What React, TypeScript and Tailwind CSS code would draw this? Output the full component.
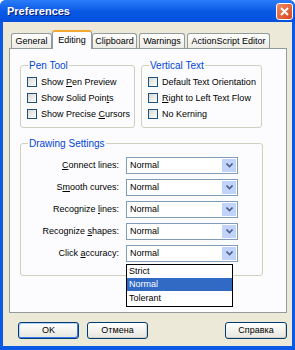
import React from 'react'

const font = { fontFamily: '"Liberation Sans", Arial, sans-serif' }

function Checkbox({ children }: { children: React.ReactNode }) {
    return (
        <div className="h-[16px] flex items-center gap-[4px]">
            <span className="w-[10px] h-[10px] border border-[#1c5180] bg-gradient-to-br from-[#d8d8d0] to-[#ffffff] shrink-0" />
            <span className="text-[9px] leading-none text-black whitespace-nowrap">{children}</span>
        </div>
    )
}

function GroupBox({ title, className, children }: { title: string; className: string; children: React.ReactNode }) {
    return (
        <div className={`relative border border-[#d0d0bf] rounded-[3px] ${className}`}>
            <span className="absolute -top-[6px] left-[7px] bg-[#fcfcfe] px-[1px] text-[10px] leading-[11px] text-[#0046d5] whitespace-nowrap">
                {title}
            </span>
            {children}
        </div>
    )
}

function Combo({ label, open }: { label: React.ReactNode; open?: boolean }) {
    return (
        <div className="h-[17px] flex items-center">
            <div className="w-[98px] text-right text-[9px] leading-none text-black whitespace-nowrap">{label}</div>
            <div className="relative ml-[7px] w-[112px] h-[17px] border border-[#7f9db9] bg-white flex items-center">
                <span className="pl-[3px] text-[9px] leading-none text-black">Normal</span>
                <span className="ml-auto mr-[1px] w-[14px] h-[13px] bg-[#c1d3fb] flex items-center justify-center">
                    <svg width="7" height="5" viewBox="0 0 7 5">
                        <path d="M0.5 0.5 L3.5 3.5 L6.5 0.5" fill="none" stroke="#4d6185" strokeWidth="1.6" />
                    </svg>
                </span>
                {open && (
                    <div className="absolute left-[-1px] top-[18px] w-[107px] border border-black bg-white z-20">
                        <div className="h-[13px] pl-[2px] flex items-center text-[9px] leading-none text-black">Strict</div>
                        <div className="h-[13px] pl-[2px] flex items-center text-[9px] leading-none text-white bg-[#316ac5]">Normal</div>
                        <div className="h-[15px] pl-[2px] flex items-center text-[9px] leading-none text-black">Tolerant</div>
                    </div>
                )}
            </div>
        </div>
    )
}

function Tab({ label, w, active }: { label: string; w: string; active?: boolean }) {
    if (active) {
        return (
            <div className={`${w} h-[19px] -mb-px relative z-10 border-x border-[#919b9c] border-t-2 border-t-[#f0a830] rounded-t-[3px] bg-[#fcfcfe] flex items-center justify-center text-[9px] leading-none text-black`}>
                {label}
            </div>
        )
    }
    return (
        <div className={`${w} h-[15px] border-x border-t border-[#919b9c] rounded-t-[3px] bg-gradient-to-b from-[#ffffff] to-[#ecebe5] flex items-center justify-center text-[9px] leading-none text-black`}>
            {label}
        </div>
    )
}

function Button({ label, def, w }: { label: string; def?: boolean; w: string }) {
    return (
        <div
            className={`${w} h-[17px] rounded-[3px] border border-[#003c74] bg-gradient-to-b from-[#ffffff] to-[#e6e5dd] flex items-center justify-center text-[9px] leading-none text-black ${def ? 'shadow-[inset_-1px_-1px_0_#3d7bf3,inset_1px_1px_0_#b4cff8]' : 'shadow-[inset_-1px_-1px_0_#d6d0c5]'}`}
        >
            {label}
        </div>
    )
}

export default function App() {
    return (
        <div style={font} className="w-[295px] h-[350px] bg-[#0a5ae6] rounded-t-[6px] flex flex-col overflow-hidden">
            <div className="h-[22px] shrink-0 flex items-center pl-[7px] pr-[2px] bg-gradient-to-b from-[#2a7cf8] via-[#0a5ae6] to-[#0550dc]">
                <span className="text-[11px] font-bold text-white leading-none [text-shadow:1px_1px_0_#0a1e80]">Preferences</span>
                <span className="ml-auto w-[17px] h-[17px] rounded-[3px] border border-white bg-gradient-to-br from-[#ee8a5e] to-[#d8421c] flex items-center justify-center">
                    <svg width="9" height="9" viewBox="0 0 9 9">
                        <path d="M1 1 L8 8 M8 1 L1 8" stroke="white" strokeWidth="2" />
                    </svg>
                </span>
            </div>
            <div className="flex-1 mx-[3px] mb-[4px] bg-[#ece9d8] flex flex-col">
                <div className="pt-[7px] pl-[8px] flex items-end h-[26px]">
                    <Tab label="General" w="w-[41px]" />
                    <Tab label="Editing" w="w-[40px]" active />
                    <Tab label="Clipboard" w="w-[45px]" />
                    <div className="w-[2px]" />
                    <Tab label="Warnings" w="w-[46px]" />
                    <div className="w-[2px]" />
                    <Tab label="ActionScript Editor" w="w-[83px]" />
                </div>
                <div className="ml-[6px] w-[278px] h-[265px] border border-[#919b9c] bg-[#fcfcfe] pl-[10px] pt-[16px]">
                    <div className="flex gap-[6px]">
                        <GroupBox title="Pen Tool" className="w-[115px] h-[63px] pl-[6px] pt-[8px]">
                            <Checkbox>Show <u>P</u>en Preview</Checkbox>
                            <Checkbox>Show Solid Poin<u>t</u>s</Checkbox>
                            <Checkbox>Show Precise <u>C</u>ursors</Checkbox>
                        </GroupBox>
                        <GroupBox title="Vertical Text" className="w-[121px] h-[63px] pl-[6px] pt-[8px]">
                            <Checkbox>Default Text Orientation</Checkbox>
                            <Checkbox><u>R</u>ight to Left Text Flow</Checkbox>
                            <Checkbox>No Kerning</Checkbox>
                        </GroupBox>
                    </div>
                    <GroupBox title="Drawing Settings" className="mt-[15px] w-[243px] h-[133px] pt-[13px] flex flex-col gap-[5px]">
                        <Combo label={<><u>C</u>onnect lines:</>} />
                        <Combo label={<>S<u>m</u>ooth curves:</>} />
                        <Combo label={<>Recognize <u>l</u>ines:</>} />
                        <Combo label={<>Recognize <u>s</u>hapes:</>} />
                        <Combo label={<>Click <u>a</u>ccuracy:</>} open />
                    </GroupBox>
                </div>
                <div className="flex mt-[9px] pl-[15px] pr-[5px]">
                    <Button label="OK" def w="w-[61px]" />
                    <div className="w-[8px]" />
                    <Button label="Отмена" w="w-[61px]" />
                    <div className="flex-1" />
                    <Button label="Справка" w="w-[62px]" />
                </div>
            </div>
        </div>
    )
}
